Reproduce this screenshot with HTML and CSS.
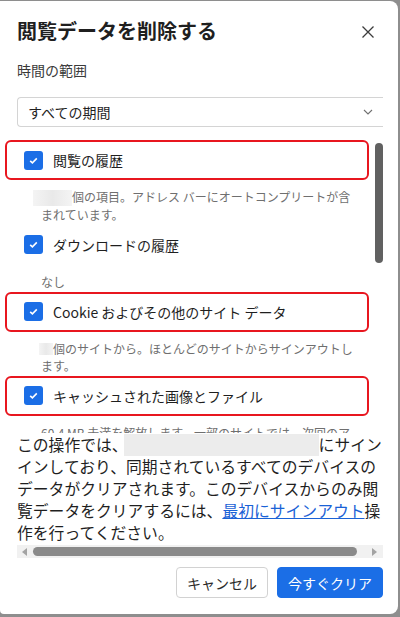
FILE: index.html
```html
<!DOCTYPE html>
<html lang="ja">
<head>
  <meta charset="UTF-8">
  <meta name="viewport" content="width=device-width, initial-scale=1.0">
  <title>閲覧データを削除する</title>
  <link rel="stylesheet" href="styles.css">
</head>
<body>

  <div class="dialog">
    <div class="header">
      <h2>閲覧データを削除する</h2>
      <button class="close" aria-label="閉じる">
        <svg width="14" height="14" viewBox="0 0 14 14"><path d="M1.5 1.5L12.5 12.5M12.5 1.5L1.5 12.5" stroke="#3c3c3c" stroke-width="1.3" fill="none"/></svg>
      </button>
    </div>

    <div class="range-label">時間の範囲</div>
    <div class="select">
      <span>すべての期間</span>
      <svg width="10" height="6" viewBox="0 0 10 6"><path d="M1 1L5 5L9 1" stroke="#707070" stroke-width="1.1" fill="none"/></svg>
    </div>

    <div class="list">
      <div class="item">
        <div class="row marked">
          <span class="check"><svg width="19" height="19" viewBox="0 0 19 19"><path d="M6.2 9.8L8.4 11.9L12.8 7.4" stroke="#fff" stroke-width="1.6" fill="none"/></svg></span>
          <span>閲覧の履歴</span>
        </div>
        <p class="desc"><span class="blur blur-a"></span>個の項目。アドレス バーにオートコンプリートが含<br>まれています。</p>
      </div>
      <div class="item">
        <div class="row">
          <span class="check"><svg width="19" height="19" viewBox="0 0 19 19"><path d="M6.2 9.8L8.4 11.9L12.8 7.4" stroke="#fff" stroke-width="1.6" fill="none"/></svg></span>
          <span>ダウンロードの履歴</span>
        </div>
        <p class="desc">なし</p>
      </div>
      <div class="item">
        <div class="row marked">
          <span class="check"><svg width="19" height="19" viewBox="0 0 19 19"><path d="M6.2 9.8L8.4 11.9L12.8 7.4" stroke="#fff" stroke-width="1.6" fill="none"/></svg></span>
          <span>Cookie およびその他のサイト データ</span>
        </div>
        <p class="desc"><span class="blur blur-b"></span>個のサイトから。ほとんどのサイトからサインアウトし<br>ます。</p>
      </div>
      <div class="item">
        <div class="row marked">
          <span class="check"><svg width="19" height="19" viewBox="0 0 19 19"><path d="M6.2 9.8L8.4 11.9L12.8 7.4" stroke="#fff" stroke-width="1.6" fill="none"/></svg></span>
          <span>キャッシュされた画像とファイル</span>
        </div>
        <p class="desc">60.4 MB 未満を解放します。一部のサイトでは、次回のア</p>
      </div>
      <div class="vthumb"></div>
    </div>

    <p class="notice">この操作では、<span class="blur blur-c"></span>にサイン<br>インしており、同期されているすべてのデバイスの<br>データがクリアされます。このデバイスからのみ閲<br>覧データをクリアするには、<a href="#">最初にサインアウト</a>操<br>作を行ってください。</p>

    <div class="hscroll">
      <span class="arrow left"></span>
      <span class="hthumb"></span>
      <span class="arrow right"></span>
    </div>

    <div class="actions">
      <button class="btn cancel">キャンセル</button>
      <button class="btn primary">今すぐクリア</button>
    </div>
  </div>

</body>
</html>
```

FILE: styles.css
```css
body {
  margin: 0;
  background-color: #8e8e8e;
  font-family: "Noto Sans CJK JP", "Noto Sans", sans-serif;
  color: #1f1f1f;
}
.dialog {
  box-sizing: border-box;
  height: 613px;
  margin: 1px 2px 0 0;
  padding: 16px 15px 0 17px;
  background-color: #ffffff;
  border-radius: 0 8px 8px 4px;
}
.header {
  display: flex;
  justify-content: space-between;
  align-items: center;
  height: 28px;
}
h2 {
  margin: 0;
  font-size: 20px;
  line-height: 28px;
  font-weight: bold;
  color: #1f1f1f;
}
.close {
  display: flex;
  padding: 0;
  margin: 2px 8px 0 0;
  border: none;
  background: none;
}
.range-label {
  margin-top: 15px;
  font-size: 14px;
  line-height: 20px;
  color: #3a3a3a;
}
.select {
  box-sizing: border-box;
  display: flex;
  justify-content: space-between;
  align-items: center;
  height: 30px;
  margin-top: 17px;
  padding: 0 10px 0 10px;
  border: 1px solid #d4d4d4;
  border-right: none;
  border-radius: 4px 0 0 4px;
  font-size: 14px;
  color: #1f1f1f;
}
.list {
  position: relative;
  box-sizing: border-box;
  height: 298px;
  margin: 8px 0 0 -12px;
  padding-top: 5px;
  overflow: hidden;
}
.row {
  box-sizing: border-box;
  display: flex;
  align-items: center;
  gap: 10px;
  width: 364px;
  height: 40px;
  padding-left: 17px;
  border: 2px solid transparent;
  border-radius: 6px;
  font-size: 14px;
  color: #1f1f1f;
}
.row.marked {
  border-color: #e8161f;
}
.check {
  display: flex;
  width: 19px;
  height: 19px;
  border-radius: 3px;
  background-color: #1b6ee6;
}
.desc {
  margin: 8px 0 2px 36px;
  font-size: 12px;
  line-height: 17px;
  color: #6f6f6f;
}
.blur {
  display: inline-block;
  vertical-align: middle;
  background: linear-gradient(90deg, #f4f4f4, #e9e9e9 50%, #f4f4f4);
}
.blur-a {
  width: 39px;
  height: 16px;
  margin: -2px 0 0 -8px;
}
.blur-b {
  width: 14px;
  height: 12px;
  margin: -2px 0 0 -2px;
}
.blur-c {
  width: 195px;
  height: 22px;
  margin: -4px 0 0 -4px;
  background: #ececec;
}
.vthumb {
  position: absolute;
  top: 8px;
  right: 0;
  width: 8px;
  height: 120px;
  border-radius: 4px;
  background-color: #616161;
}
.notice {
  margin: 1px 0 0;
  font-size: 15.8px;
  line-height: 22px;
  color: #1f1f1f;
  white-space: nowrap;
}
.notice a {
  color: #1a62d6;
}
.hscroll {
  display: flex;
  align-items: center;
  height: 13px;
  margin-top: 1px;
  background-color: #f1f1f1;
}
.arrow {
  width: 0;
  height: 0;
  border-top: 4px solid transparent;
  border-bottom: 4px solid transparent;
}
.arrow.left {
  margin-left: 5px;
  border-right: 5px solid #a3a3a3;
}
.arrow.right {
  margin-left: auto;
  margin-right: 6px;
  border-left: 5px solid #a3a3a3;
}
.hthumb {
  width: 324px;
  height: 9px;
  margin-left: 6px;
  border-radius: 5px;
  background-color: #8a8a8a;
}
.actions {
  display: flex;
  justify-content: flex-end;
  gap: 9px;
  margin-top: 9px;
}
.btn {
  height: 31px;
  padding: 0 10px;
  border-radius: 4px;
  font-family: "Noto Sans CJK JP", "Noto Sans", sans-serif;
  font-size: 14px;
  cursor: pointer;
}
.cancel {
  border: 1px solid #d2d2d2;
  background-color: #ffffff;
  color: #2b2b2b;
}
.primary {
  border: 1px solid #1b6ee6;
  background-color: #1b6ee6;
  color: #ffffff;
}
```
